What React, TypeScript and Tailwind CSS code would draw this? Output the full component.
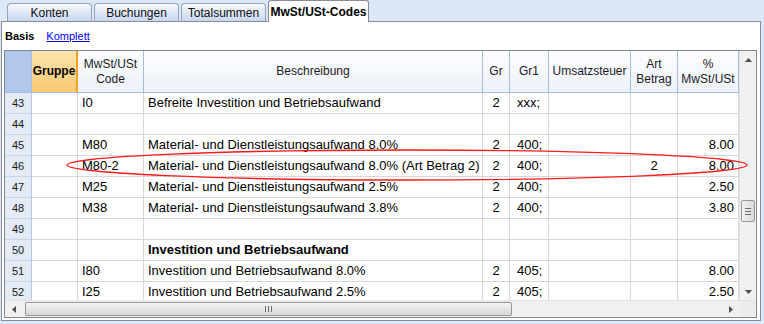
import React from 'react';

type Row = {
  nr: number;
  code?: string;
  desc?: string;
  bold?: boolean;
  gr?: string;
  gr1?: string;
  art?: string;
  pct?: string;
};

const rows: Row[] = [
  { nr: 43, code: 'I0', desc: 'Befreite Investition und Betriebsaufwand', gr: '2', gr1: 'xxx;' },
  { nr: 44 },
  { nr: 45, code: 'M80', desc: 'Material- und Dienstleistungsaufwand 8.0%', gr: '2', gr1: '400;', pct: '8.00' },
  {
    nr: 46,
    code: 'M80-2',
    desc: 'Material- und Dienstleistungsaufwand 8.0% (Art Betrag 2)',
    gr: '2',
    gr1: '400;',
    art: '2',
    pct: '8.00',
  },
  { nr: 47, code: 'M25', desc: 'Material- und Dienstleistungsaufwand 2.5%', gr: '2', gr1: '400;', pct: '2.50' },
  { nr: 48, code: 'M38', desc: 'Material- und Dienstleistungsaufwand 3.8%', gr: '2', gr1: '400;', pct: '3.80' },
  { nr: 49 },
  { nr: 50, desc: 'Investition und Betriebsaufwand', bold: true },
  { nr: 51, code: 'I80', desc: 'Investition und Betriebsaufwand 8.0%', gr: '2', gr1: '405;', pct: '8.00' },
  { nr: 52, code: 'I25', desc: 'Investition und Betriebsaufwand 2.5%', gr: '2', gr1: '405;', pct: '2.50' },
];

const cols = 'grid grid-cols-[27px_46px_66px_339px_27px_39px_82px_47px_61px]';

const Tab = ({ label, active }: { label: string; active?: boolean }) =>
  active ? (
    <div className="h-[22px] w-[101px] -mb-[1px] rounded-t-[3px] border border-b-0 border-[#898c95] bg-white flex items-center justify-center text-[12px] font-bold text-black relative z-10">
      {label}
    </div>
  ) : (
    <div className="h-[18px] w-[85px] rounded-t-[4px] border border-b-0 border-[#95a5bd] bg-gradient-to-b from-[#f7f9fd] to-[#c6d8f0] flex items-center justify-center text-[12px] text-[#111]">
      {label}
    </div>
  );

const Arrow = ({ dir }: { dir: 'up' | 'down' | 'left' | 'right' }) => {
  const pts = {
    up: '0,4 3.5,0 7,4',
    down: '0,0 7,0 3.5,4',
    left: '4,0 4,7 0,3.5',
    right: '0,0 0,7 4,3.5',
  }[dir];
  const vert = dir === 'up' || dir === 'down';
  return (
    <svg width={vert ? 7 : 4} height={vert ? 4 : 7} viewBox={vert ? '0 0 7 4' : '0 0 4 7'}>
      <polygon points={pts} fill="#4d4d4d" />
    </svg>
  );
};

export default function App() {
  return (
    <div className="w-[764px] h-[324px] bg-[#dce8f5] relative overflow-hidden font-['Liberation_Sans',Arial,sans-serif]">
      {/* tab strip */}
      <div className="h-[21px] flex items-end gap-[2px] pl-[7px]">
        <Tab label="Konten" />
        <Tab label="Buchungen" />
        <Tab label="Totalsummen" />
        <Tab label="MwSt/USt-Codes" active />
      </div>

      {/* panel */}
      <div className="ml-[1px] w-[760px] h-[300px] border border-[#898c95] bg-white flex flex-col">
        <div className="h-[28px] flex items-center gap-[12px] pl-[3px] text-[11px]">
          <span className="font-bold text-black">Basis</span>
          <span className="text-[#0000ee] underline">Komplett</span>
        </div>

        <div className="ml-[2px] w-[753px] h-[268px] border border-[#828790] flex flex-col">
          <div className="flex h-[249px]">
            {/* table */}
            <div className="w-[734px] flex flex-col overflow-hidden">
              <div className={`${cols} h-[42px] shrink-0 border-b border-[#a7bedb] text-[12px] leading-[15px] text-[#1b1b1b]`}>
                <div className="bg-[#b0c8ec] border-r border-[#a7bedb]" />
                <div className="bg-gradient-to-b from-[#fde4ae] to-[#f7c86f] border-r-2 border-[#f3a02a] flex items-center justify-center font-bold text-black">
                  Gruppe
                </div>
                <div className="bg-gradient-to-b from-[#fcfdff] to-[#edf2f9] border-r border-[#a7bedb] flex items-center justify-center text-center">
                  MwSt/USt
                  <br />
                  Code
                </div>
                <div className="bg-gradient-to-b from-[#fcfdff] to-[#edf2f9] border-r border-[#a7bedb] flex items-center justify-center">
                  Beschreibung
                </div>
                <div className="bg-gradient-to-b from-[#fcfdff] to-[#edf2f9] border-r border-[#a7bedb] flex items-center justify-center">
                  Gr
                </div>
                <div className="bg-gradient-to-b from-[#fcfdff] to-[#edf2f9] border-r border-[#a7bedb] flex items-center justify-center">
                  Gr1
                </div>
                <div className="bg-gradient-to-b from-[#fcfdff] to-[#edf2f9] border-r border-[#a7bedb] flex items-center justify-center">
                  Umsatzsteuer
                </div>
                <div className="bg-gradient-to-b from-[#fcfdff] to-[#edf2f9] border-r border-[#a7bedb] flex items-center justify-center text-center">
                  Art
                  <br />
                  Betrag
                </div>
                <div className="bg-gradient-to-b from-[#fcfdff] to-[#edf2f9] border-r border-[#a7bedb] flex items-center justify-center text-center">
                  %
                  <br />
                  MwSt/USt
                </div>
              </div>

              {rows.map((r) => (
                <div key={r.nr} className={`${cols} h-[21px] shrink-0 text-[13px] text-black`}>
                  <div className="bg-[#e3ebf6] border-r border-b border-r-[#b3c7e0] border-b-[#c6d5e8] flex items-center justify-center text-[11px] text-[#1a1a1a]">
                    {r.nr}
                  </div>
                  <div className="border-r border-b border-[#d8d8d8]" />
                  <div className="border-r border-b border-[#d8d8d8] flex items-center pl-[4px]">{r.code}</div>
                  <div
                    className={`border-r border-b border-[#d8d8d8] flex items-center pl-[4px] whitespace-nowrap ${
                      r.bold ? 'font-bold' : ''
                    }`}
                  >
                    {r.desc}
                  </div>
                  <div className="border-r border-b border-[#d8d8d8] flex items-center justify-center">{r.gr}</div>
                  <div className="border-r border-b border-[#d8d8d8] flex items-center pl-[7px]">{r.gr1}</div>
                  <div className="border-r border-b border-[#d8d8d8]" />
                  <div className="border-r border-b border-[#d8d8d8] flex items-center justify-center">{r.art}</div>
                  <div className="border-r border-b border-[#d8d8d8] flex items-center justify-end pr-[4px]">
                    {r.pct}
                  </div>
                </div>
              ))}
            </div>

            {/* vertical scrollbar */}
            <div className="w-[17px] bg-[#f0f0f0] border-l border-[#e3e3e3] flex flex-col items-center">
              <div className="h-[17px] flex items-center justify-center">
                <Arrow dir="up" />
              </div>
              <div className="flex-1 w-full relative">
                <div className="absolute left-[1px] top-[132px] w-[14px] h-[22px] rounded-[2px] border border-[#979797] bg-gradient-to-r from-[#f2f2f2] to-[#d9d9d9] flex flex-col items-center justify-center gap-[2px]">
                  <div className="w-[6px] h-[1px] bg-[#707070]" />
                  <div className="w-[6px] h-[1px] bg-[#707070]" />
                  <div className="w-[6px] h-[1px] bg-[#707070]" />
                </div>
              </div>
              <div className="h-[17px] flex items-center justify-center">
                <Arrow dir="down" />
              </div>
            </div>
          </div>

          {/* horizontal scrollbar */}
          <div className="h-[17px] flex border-t border-[#e3e3e3]">
            <div className="w-[734px] bg-[#f0f0f0] flex items-center">
              <div className="w-[17px] flex items-center justify-center">
                <Arrow dir="left" />
              </div>
              <div className="w-[487px] h-[14px] ml-[3px] rounded-[2px] border border-[#979797] bg-gradient-to-b from-[#f3f3f3] to-[#d8d8d8] flex items-center justify-center gap-[2px]">
                <div className="w-[1px] h-[6px] bg-[#707070]" />
                <div className="w-[1px] h-[6px] bg-[#707070]" />
                <div className="w-[1px] h-[6px] bg-[#707070]" />
              </div>
              <div className="flex-1" />
              <div className="w-[17px] flex items-center justify-center">
                <Arrow dir="right" />
              </div>
            </div>
            <div className="w-[17px] bg-[#ececec]" />
          </div>
        </div>
      </div>

      {/* red highlight ellipse */}
      <svg className="absolute left-0 top-0 pointer-events-none" width="764" height="324">
        <ellipse cx="407" cy="165" rx="340" ry="15" fill="none" stroke="#ff1a1a" strokeWidth="1.4" />
      </svg>
    </div>
  );
}
